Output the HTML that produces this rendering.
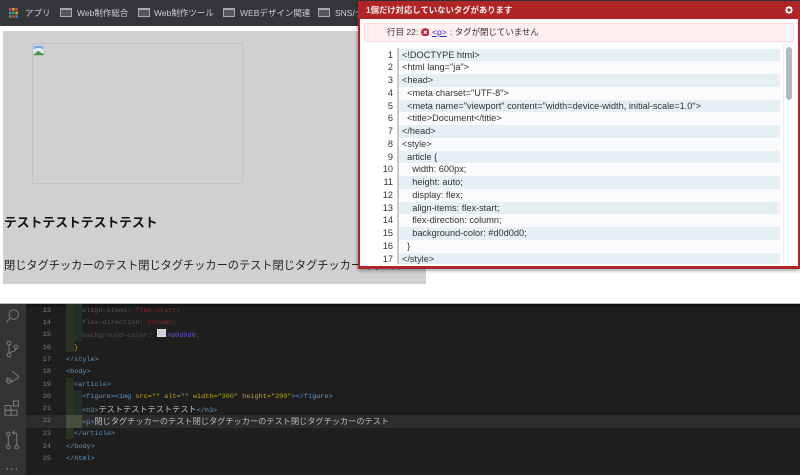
<!DOCTYPE html>
<html lang="ja"><head><meta charset="UTF-8"><title>Tag checker</title>
<style>
html,body{margin:0;padding:0;background:#fff}
#root{position:relative;width:800px;height:475px;overflow:hidden;font-family:"Liberation Sans","Noto Sans CJK JP",sans-serif;background:#fff;filter:blur(.3px)}
.a{position:absolute;white-space:pre}
.bm{position:absolute;top:0;height:26px;line-height:26px;font-size:8.5px;color:#d0d1d3;white-space:pre}
.fd{position:absolute;top:8px;width:12px;height:9px;background:#55565a;border:1px solid #a8a9ab;box-sizing:border-box;border-top-width:2px}
.row{position:absolute;left:399px;width:381px;height:12.75px;line-height:12.75px;font-size:9.2px;color:#333;white-space:pre;padding-left:3px;box-sizing:border-box}
.row.o{background:#e4f0f4}.row.e{background:#f9fbfc}
.n{position:absolute;left:370px;width:23px;text-align:right;height:12.75px;line-height:12.75px;font-size:9.2px;color:#333}
.l{position:absolute;left:26px;width:774px;height:12.35px;line-height:12.35px;font-family:"Liberation Mono","Noto Sans CJK JP",monospace;font-size:6.85px;white-space:pre;color:#569cd6;margin-top:.7px}
.ln{position:absolute;left:1px;width:24px;text-align:right;color:#808080}
.c{position:absolute;left:40px;color:#569cd6}
.j{font-size:8.2px;color:#bdbdbd;font-family:"Noto Sans CJK JP",sans-serif}
.g{position:absolute}
.at{color:#c0a820}.st{color:#a8ad1c}.rd{color:#982222}.dm{color:#545454}
</style></head><body><div id="root">

<!-- bookmarks bar -->
<div class="a" style="left:0;top:0;width:800px;height:26px;background:#35363a"></div>
<svg class="a" style="left:9px;top:8px" width="9" height="10" viewBox="0 0 9 10"><g>
<rect x="0" y="0" width="2.4" height="2.6" fill="#d44"/><rect x="3.2" y="0" width="2.4" height="2.6" fill="#e8b030"/><rect x="6.4" y="0" width="2.4" height="2.6" fill="#d44"/>
<rect x="0" y="3.6" width="2.4" height="2.6" fill="#4285f4"/><rect x="3.2" y="3.6" width="2.4" height="2.6" fill="#34a853"/><rect x="6.4" y="3.6" width="2.4" height="2.6" fill="#e8b030"/>
<rect x="0" y="7.2" width="2.4" height="2.6" fill="#34a853"/><rect x="3.2" y="7.2" width="2.4" height="2.6" fill="#d44"/><rect x="6.4" y="7.2" width="2.4" height="2.6" fill="#4285f4"/></g></svg>
<div class="bm" style="left:25px">アプリ</div>
<div class="fd" style="left:60px"></div><div class="bm" style="left:77px">Web制作総合</div>
<div class="fd" style="left:138px"></div><div class="bm" style="left:154px">Web制作ツール</div>
<div class="fd" style="left:223px"></div><div class="bm" style="left:240px">WEBデザイン関連</div>
<div class="fd" style="left:318px"></div><div class="bm" style="left:335px">SNS/クラウド</div>

<!-- page -->
<div class="a" style="left:3px;top:31px;width:423px;height:253px;background:#d0d0d0"></div>
<div class="a" style="left:32px;top:43px;width:211px;height:141px;border:1px solid #c2c2c2;box-sizing:border-box"></div>
<svg class="a" style="left:33px;top:45px" width="12" height="11" viewBox="0 0 12 13" preserveAspectRatio="none"><path d="M0 0H8L11 3V12H0Z" fill="#dfe8f6" stroke="#a9b4c4" stroke-width=".6"/><path d="M1 5C3 3 6 3 8 4L10 5V3L8 1H1Z" fill="#7aa4e8"/><path d="M1 11L5 7L8 9L11 11V12H1Z" fill="#4e9a3a"/></svg>
<div class="a" style="left:4px;top:213px;font-size:12.8px;line-height:20px;font-weight:bold;color:#111">テストテストテストテスト</div>
<div class="a" style="left:4px;top:258px;font-size:11.2px;line-height:16px;color:#222">閉じタグチッカーのテスト閉じタグチッカーのテスト閉じタグチッカーのテスト</div>

<!-- panel -->
<div class="a" style="left:358px;top:1px;width:442px;height:268px;background:#b02525;box-shadow:0 1px 4px rgba(0,0,0,.45)"></div>
<div class="a" style="left:360px;top:19px;width:438px;height:247px;background:#fff"></div>
<div class="a" style="left:366px;top:0;height:19px;line-height:20px;font-size:8.35px;font-weight:bold;color:#fbeeee">1個だけ対応していないタグがあります</div>
<svg class="a" style="left:785px;top:5.5px" width="8" height="8" viewBox="0 0 10 10"><circle cx="5" cy="5" r="3.2" fill="none" stroke="#fff" stroke-width="2.2"/><path d="M5 0V2M5 8V10M0 5H2M8 5H10M1.5 1.5L2.8 2.8M7.2 7.2L8.5 8.5M8.5 1.5L7.2 2.8M2.8 7.2L1.5 8.5" stroke="#fff" stroke-width="1.4"/></svg>

<div class="a" style="left:364px;top:23px;width:430px;height:19px;background:#ffefef;border:1px solid #fbdcdc;box-sizing:border-box"></div>
<div class="a" style="left:783px;top:24px;width:10px;height:17px;background:#f8f5f5"></div>
<div class="a" style="left:387px;top:23px;height:19px;line-height:19px;font-size:8.5px;color:#333">行目 22:</div>
<svg class="a" style="left:420.5px;top:27.5px" width="8.5" height="8.5" viewBox="0 0 10 10"><circle cx="5" cy="5" r="4.9" fill="#b5283a"/><path d="M3.2 3.2L6.8 6.8M6.8 3.2L3.2 6.8" stroke="#fff" stroke-width="1.2"/></svg>
<div class="a" style="left:432px;top:23px;height:19px;line-height:19px;font-size:8.5px;color:#2a2ae0;text-decoration:underline">&lt;p&gt;</div>
<div class="a" style="left:450px;top:23px;height:19px;line-height:19px;font-size:8.45px;color:#333">: タグが閉じていません</div>

<div class="a" style="left:397px;top:48px;width:2px;height:216px;background:#c8c8c8"></div>
<div class="a" style="left:783px;top:45px;width:1px;height:219px;background:#eee"></div>
<div class="a" style="left:786px;top:47px;width:5.5px;height:53px;background:#b8b8b8;border-radius:3px"></div>

<div class="n" style="top:48.6px">1</div><div class="row o" style="top:48.6px">&lt;!DOCTYPE html&gt;</div>
<div class="n" style="top:61.35px">2</div><div class="row e" style="top:61.35px">&lt;html lang="ja"&gt;</div>
<div class="n" style="top:74.1px">3</div><div class="row o" style="top:74.1px">&lt;head&gt;</div>
<div class="n" style="top:86.85px">4</div><div class="row e" style="top:86.85px">  &lt;meta charset="UTF-8"&gt;</div>
<div class="n" style="top:99.6px">5</div><div class="row o" style="top:99.6px">  &lt;meta name="viewport" content="width=device-width, initial-scale=1.0"&gt;</div>
<div class="n" style="top:112.35px">6</div><div class="row e" style="top:112.35px">  &lt;title&gt;Document&lt;/title&gt;</div>
<div class="n" style="top:125.1px">7</div><div class="row o" style="top:125.1px">&lt;/head&gt;</div>
<div class="n" style="top:137.85px">8</div><div class="row e" style="top:137.85px">&lt;style&gt;</div>
<div class="n" style="top:150.6px">9</div><div class="row o" style="top:150.6px">  article {</div>
<div class="n" style="top:163.35px">10</div><div class="row e" style="top:163.35px">    width: 600px;</div>
<div class="n" style="top:176.1px">11</div><div class="row o" style="top:176.1px">    height: auto;</div>
<div class="n" style="top:188.85px">12</div><div class="row e" style="top:188.85px">    display: flex;</div>
<div class="n" style="top:201.6px">13</div><div class="row o" style="top:201.6px">    align-items: flex-start;</div>
<div class="n" style="top:214.35px">14</div><div class="row e" style="top:214.35px">    flex-direction: column;</div>
<div class="n" style="top:227.1px">15</div><div class="row o" style="top:227.1px">    background-color: #d0d0d0;</div>
<div class="n" style="top:239.85px">16</div><div class="row e" style="top:239.85px">  }</div>
<div class="n" style="top:252.6px">17</div><div class="row o" style="top:252.6px;height:11.5px">&lt;/style&gt;</div>

<!-- editor -->
<div class="a" style="left:0;top:303px;width:800px;height:172px;background:#1e1e1e"></div>
<div class="a" style="left:0;top:303px;width:26px;height:172px;background:#333"></div>
<div class="a" style="left:0;top:303px;width:800px;height:1px;background:#bbb"></div>
<div class="a" style="left:26px;top:304px;width:774px;height:5px;background:linear-gradient(#111,#1e1e1e)"></div>

<div class="a" style="left:26px;top:415px;width:774px;height:13px;background:#2c2c2c"></div>
<div class="g" style="left:66px;top:304px;width:8px;height:48px;background:#2c3222"></div>
<div class="g" style="left:74px;top:304px;width:8px;height:37px;background:#1f3026"></div>
<div class="g" style="left:66px;top:378px;width:8px;height:61px;background:#2c3222"></div>
<div class="g" style="left:74px;top:391px;width:8px;height:37px;background:#1f3026"></div>
<div class="g" style="left:66px;top:415px;width:16px;height:13px;background:#454f3a"></div>

<div class="l" style="top:304px"><span class="ln">13</span><span class="c" style="left:56px"><span class="dm">align-items:</span> <span class="rd">flex-start</span><span class="dm">;</span></span></div>
<div class="l" style="top:316.35px"><span class="ln">14</span><span class="c" style="left:56px"><span class="dm">flex-direction:</span> <span class="rd">column</span><span class="dm">;</span></span></div>
<div class="l" style="top:328.7px"><span class="ln">15</span><span class="c" style="left:56px"><span class="dm">background-color:</span> <span style="display:inline-block;width:7px;height:6px;background:#d0d0d0;border:.5px solid #ddd;margin:0 1px 0 1px"></span><span style="color:#6a5acd">#d0d0d0</span><span class="dm">;</span></span></div>
<div class="l" style="top:341px"><span class="ln">16</span><span class="c" style="left:48px;color:#d8b010">}</span></div>
<div class="l" style="top:353.4px"><span class="ln">17</span><span class="c" style="left:40px">&lt;/style&gt;</span></div>
<div class="l" style="top:365.75px"><span class="ln">18</span><span class="c" style="left:40px">&lt;body&gt;</span></div>
<div class="l" style="top:378.1px"><span class="ln">19</span><span class="c" style="left:48px">&lt;article&gt;</span></div>
<div class="l" style="top:390.45px"><span class="ln">20</span><span class="c" style="left:56px">&lt;figure&gt;&lt;img <span class="at">src=</span><span class="st">""</span> <span class="at">alt=</span><span class="st">""</span> <span class="at">width=</span><span class="st">"300"</span> <span class="at">height=</span><span class="st">"200"</span>&gt;&lt;/figure&gt;</span></div>
<div class="l" style="top:402.3px"><span class="ln">21</span><span class="c" style="left:56px">&lt;h3&gt;<span class="j">テストテストテストテスト</span>&lt;/h3&gt;</span></div>
<div class="l" style="top:414.7px"><span class="ln">22</span><span class="c" style="left:56px">&lt;p&gt;<span class="j">閉じタグチッカーのテスト閉じタグチッカーのテスト閉じタグチッカーのテスト</span></span></div>
<div class="l" style="top:427.5px"><span class="ln">23</span><span class="c" style="left:48px">&lt;/article&gt;</span></div>
<div class="l" style="top:439.85px"><span class="ln">24</span><span class="c" style="left:40px">&lt;/body&gt;</span></div>
<div class="l" style="top:452.2px"><span class="ln">25</span><span class="c" style="left:40px">&lt;/html&gt;</span></div>

<!-- activity bar icons -->
<svg class="a" style="left:0;top:304px" width="26" height="171" viewBox="0 0 26 171" fill="none" stroke="#7c7c7c" stroke-width="1">
<circle cx="13.7" cy="10.5" r="4.7"/><path d="M10.4 14L6.5 18"/>
<circle cx="9" cy="39" r="1.9"/><circle cx="9" cy="51" r="1.9"/><circle cx="16" cy="43" r="1.9"/><path d="M9 41V49M16 45C16 48 11 47 9.5 49.3"/>
<path d="M12.3 67L19 73L12.3 78"/><circle cx="9" cy="77" r="2.4"/><path d="M5.5 77H12.5M6.5 73.5L7.8 75"/>
<rect x="5" y="101.5" width="6" height="4.7"/><rect x="5" y="106.2" width="6" height="5"/><rect x="11" y="106.2" width="6" height="5"/><rect x="13.5" y="97" width="5" height="5"/>
<circle cx="8.3" cy="130" r="1.8"/><circle cx="8.3" cy="143" r="1.8"/><circle cx="16.7" cy="143" r="1.8"/><path d="M8.3 132V141M16.7 141V131C16.7 129 15 128.5 13 128.5M14.5 126.5L12.5 128.5L14.5 130.5"/>
<circle cx="7.3" cy="165" r=".7" fill="#999" stroke="none"/><circle cx="11.7" cy="165" r=".7" fill="#999" stroke="none"/><circle cx="16.3" cy="165" r=".7" fill="#999" stroke="none"/>
</svg>
</div></body></html>
